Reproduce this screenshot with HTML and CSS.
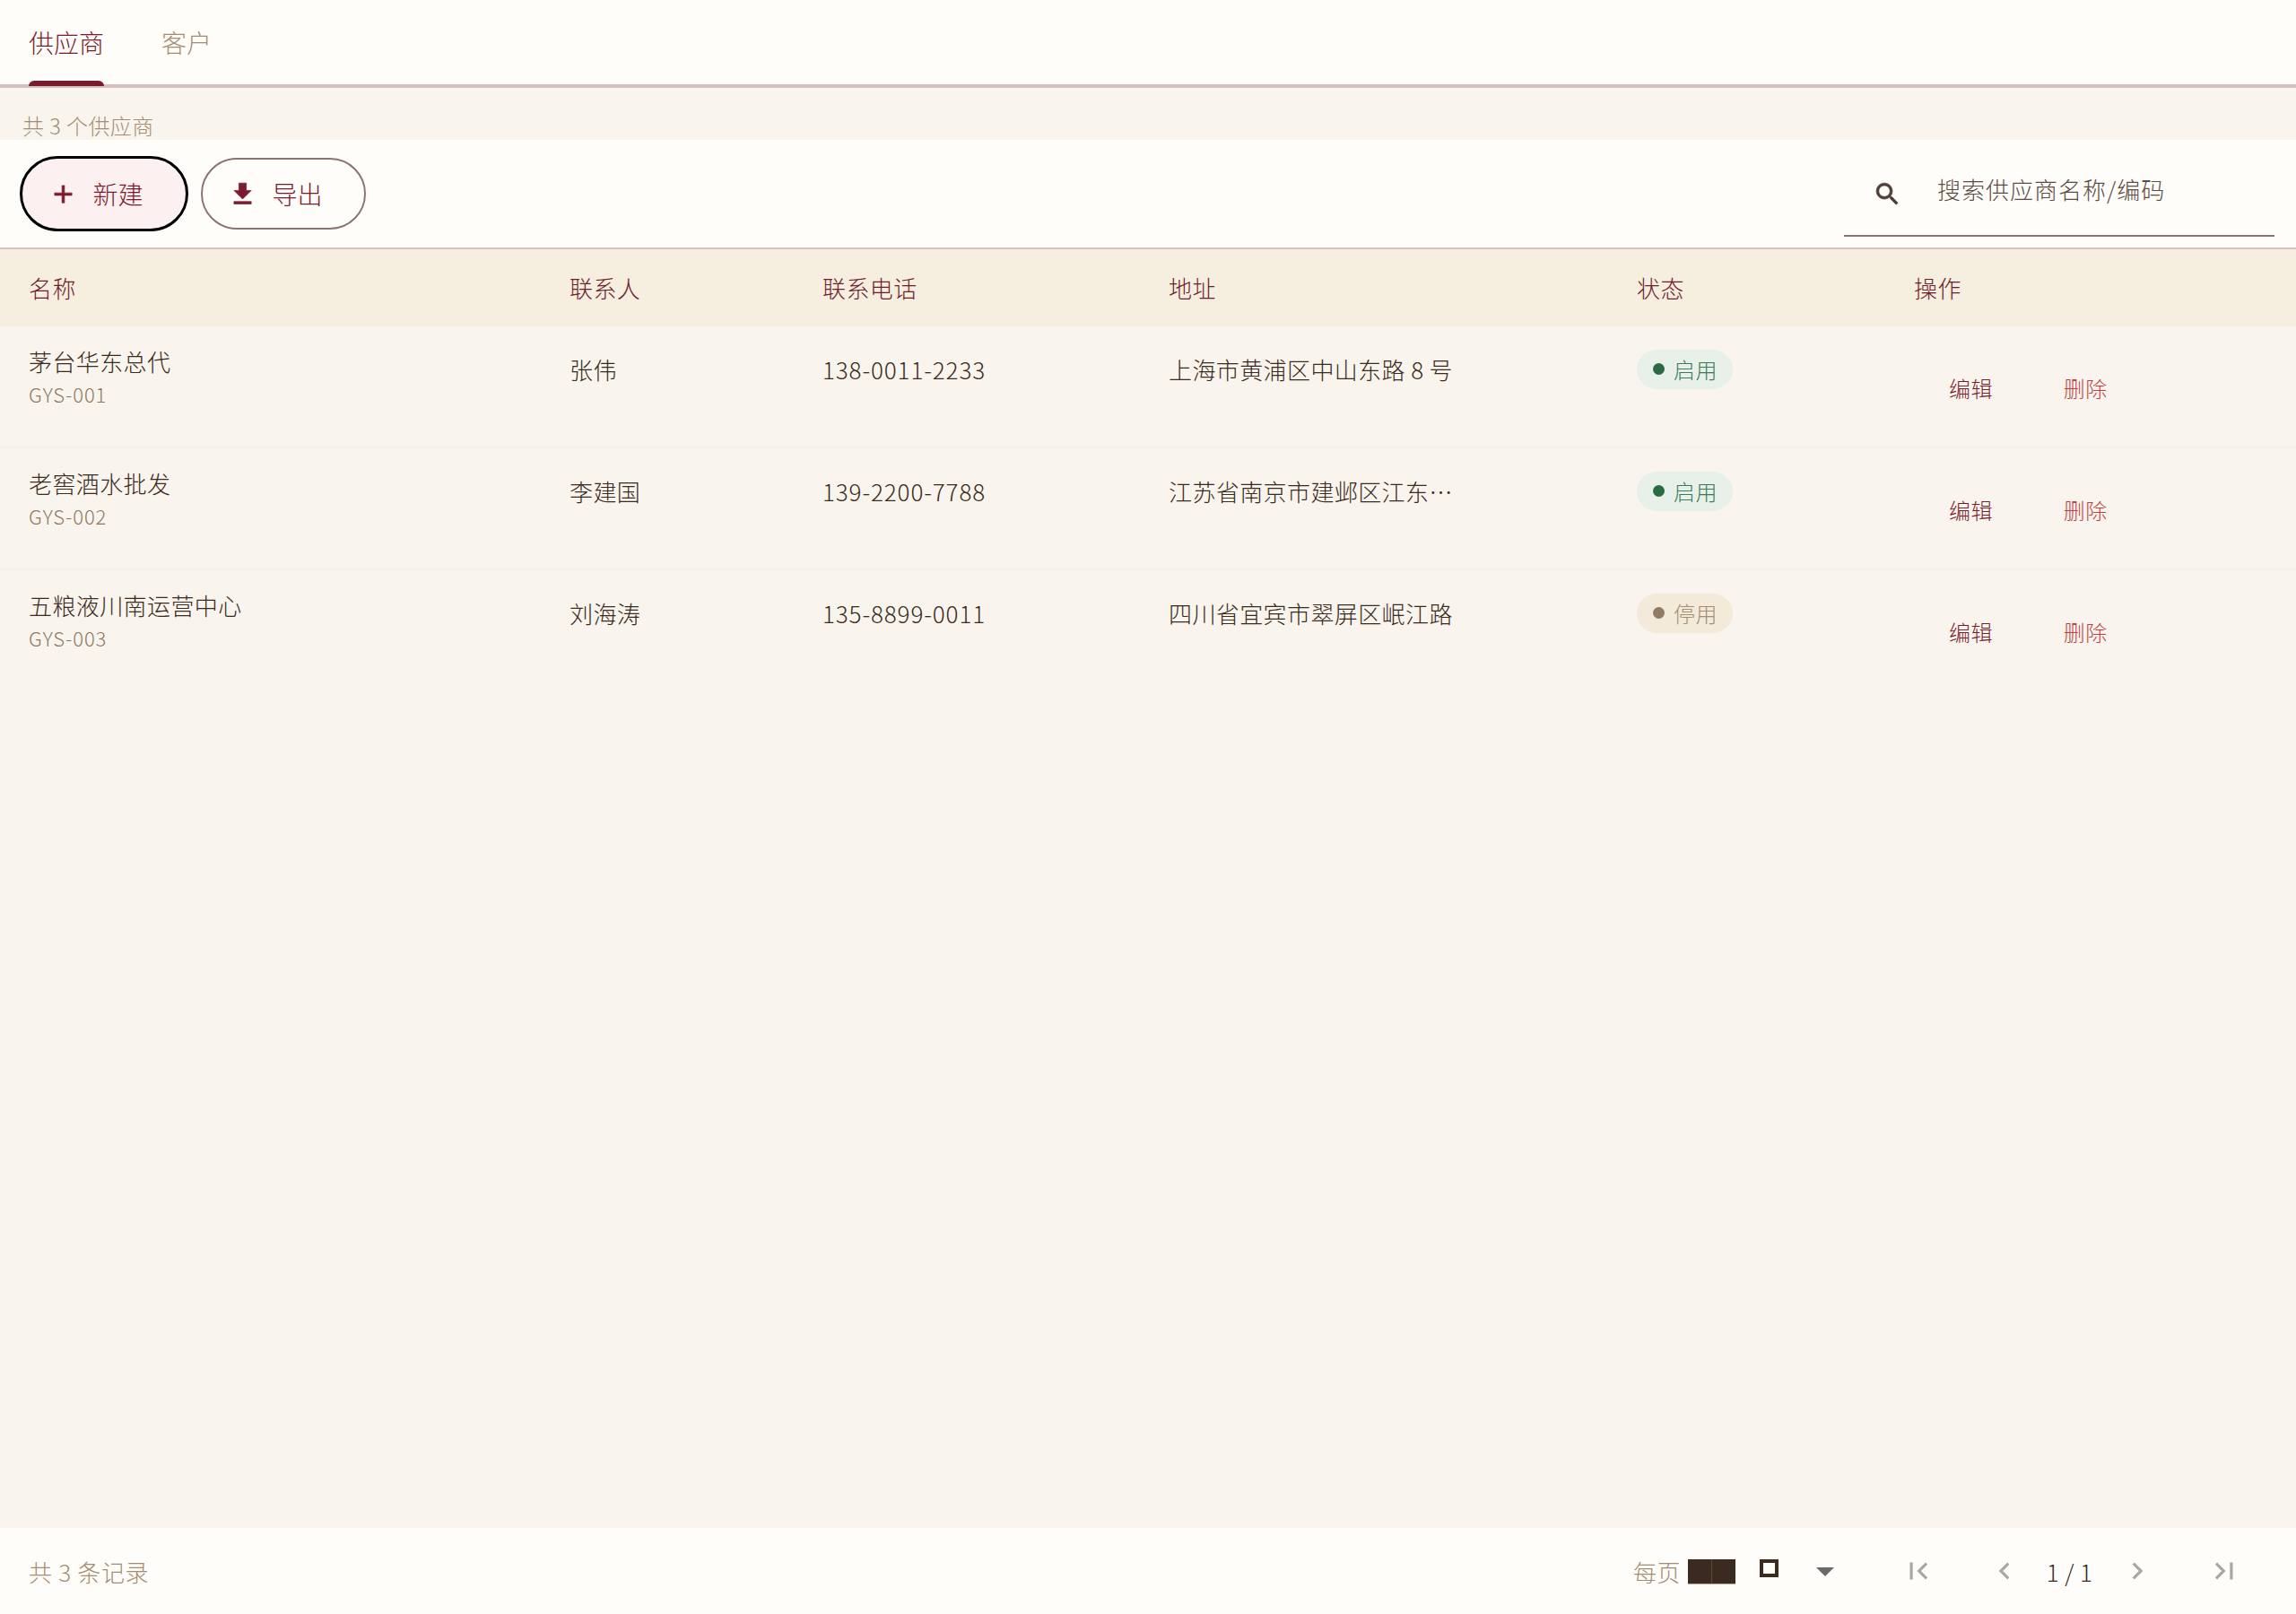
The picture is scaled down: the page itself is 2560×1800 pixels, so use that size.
FILE: index.html
```html
<!DOCTYPE html>
<html lang="zh-CN">
<head>
  <meta charset="UTF-8">
  <title>供应商</title>
  <link rel="stylesheet" href="styles.css">
</head>
<body>
  <div class="page">
    <div class="tabs">
      <div class="tab active">供应商</div>
      <div class="tab">客户</div>
    </div>
    <div class="note">共 3 个供应商</div>
    <div class="toolbar">
      <button class="btn btn-new">
        <svg class="icon" viewBox="0 0 24 24"><path d="M19 13h-6v6h-2v-6H5v-2h6V5h2v6h6v2z"/></svg>
        新建
      </button>
      <button class="btn btn-export">
        <svg class="icon" viewBox="0 0 24 24"><path d="M19 9h-4V3H9v6H5l7 7 7-7zM5 18v2h14v-2H5z"/></svg>
        导出
      </button>
      <div class="search">
        <svg class="search-icon" viewBox="0 0 24 24"><path d="M15.5 14h-.79l-.28-.27C15.41 12.59 16 11.11 16 9.5 16 5.91 13.09 3 9.5 3S3 5.91 3 9.5 5.91 16 9.5 16c1.61 0 3.09-.59 4.23-1.57l.27.28v.79l5 4.99L20.49 19l-4.99-5zm-6 0C7.01 14 5 11.99 5 9.5S7.01 5 9.5 5 14 7.01 14 9.5 11.99 14 9.5 14z"/></svg>
        <span class="search-text">搜索供应商名称/编码</span>
      </div>
    </div>

    <div class="row head">
      <div>名称</div>
      <div>联系人</div>
      <div>联系电话</div>
      <div>地址</div>
      <div>状态</div>
      <div>操作</div>
    </div>

    <div class="row item">
      <div class="cell-name">
        <div class="name">茅台华东总代</div>
        <div class="code">GYS-001</div>
      </div>
      <div class="cell">张伟</div>
      <div class="cell phone">138-0011-2233</div>
      <div class="cell"><div class="addr">上海市黄浦区中山东路 8 号</div></div>
      <div class="cell-status"><span class="pill on"><i></i>启用</span></div>
      <div class="cell-ops"><a class="edit">编辑</a><a class="del">删除</a></div>
    </div>
    <div class="row item">
      <div class="cell-name">
        <div class="name">老窖酒水批发</div>
        <div class="code">GYS-002</div>
      </div>
      <div class="cell">李建国</div>
      <div class="cell phone">139-2200-7788</div>
      <div class="cell"><div class="addr">江苏省南京市建邺区江东中路 100 号</div></div>
      <div class="cell-status"><span class="pill on"><i></i>启用</span></div>
      <div class="cell-ops"><a class="edit">编辑</a><a class="del">删除</a></div>
    </div>
    <div class="row item">
      <div class="cell-name">
        <div class="name">五粮液川南运营中心</div>
        <div class="code">GYS-003</div>
      </div>
      <div class="cell">刘海涛</div>
      <div class="cell phone">135-8899-0011</div>
      <div class="cell"><div class="addr">四川省宜宾市翠屏区岷江路</div></div>
      <div class="cell-status"><span class="pill off"><i></i>停用</span></div>
      <div class="cell-ops"><a class="edit">编辑</a><a class="del">删除</a></div>
    </div>

    <div class="spacer"></div>

    <div class="footer">
      <div class="total">共 3 条记录</div>
      <div class="pager">
        <span class="per">每页</span>
        <span class="size"><b></b><b></b></span>
        <span class="box"></span>
        <svg class="caret" viewBox="0 0 24 24"><path d="M7 10l5 5 5-5z"/></svg>
        <svg class="nav first" viewBox="0 0 24 24"><path d="M18.41 16.59L13.83 12l4.58-4.59L17 6l-6 6 6 6 1.41-1.41zM6 6h2v12H6V6z"/></svg>
        <svg class="nav prev" viewBox="0 0 24 24"><path d="M15.41 7.41L14 6l-6 6 6 6 1.41-1.41L10.83 12z"/></svg>
        <span class="num">1 / 1</span>
        <svg class="nav next" viewBox="0 0 24 24"><path d="M10 6L8.59 7.41 13.17 12l-4.58 4.59L10 18l6-6z"/></svg>
        <svg class="nav last" viewBox="0 0 24 24"><path d="M5.59 7.41L10.18 12l-4.59 4.59L7 18l6-6-6-6-1.41 1.41zM16 6h2v12h-2V6z"/></svg>
      </div>
    </div>
  </div>
</body>
</html>
```

FILE: styles.css
```css
* {
  box-sizing: border-box;
}
body {
  margin: 0;
  font-family: "Noto Sans CJK SC", "Noto Sans", sans-serif;
  font-weight: 200;
  font-variant-numeric: tabular-nums;
  letter-spacing: 0.4px;
  background: #f9f5ee;
  color: #3a2a20;
}
.page {
  height: 1800px;
  display: flex;
  flex-direction: column;
  overflow: hidden;
}
.tabs {
  height: 98px;
  display: flex;
  gap: 64px;
  padding-left: 32px;
  background: #fffdf9;
  border-bottom: 4px solid #d4c1be;
  letter-spacing: 0;
}
.tab {
  position: relative;
  height: 94px;
  font-size: 28px;
  line-height: 94px;
  color: #a48d72;
}
.tab.active {
  color: #7a1c2e;
}
.tab.active::after {
  content: "";
  position: absolute;
  left: 0;
  right: 0;
  bottom: -2px;
  height: 6px;
  background: #7a1c2e;
  border-radius: 6px 6px 0 0;
}
.note {
  height: 58px;
  padding: 27px 0 0 25px;
  font-size: 24px;
  line-height: 30px;
  color: #a48d72;
}
.toolbar {
  height: 122px;
  display: flex;
  align-items: center;
  padding: 0 24px 0 22px;
  background: #fffdf9;
  border-bottom: 2px solid #d6c4c1;
}
.btn {
  display: flex;
  align-items: center;
  justify-content: center;
  padding: 0 18px 0 0;
  font-family: inherit;
  font-weight: 200;
  font-size: 28px;
  color: #7a1c2e;
  border-radius: 42px;
}
.btn-new {
  width: 188px;
  height: 84px;
  background: #fdf0f0;
  border: 3px solid #000;
}
.btn-export {
  width: 184px;
  height: 80px;
  margin-left: 14px;
  background: #fffdf9;
  border: 2px solid #8a7571;
}
.icon {
  width: 33px;
  height: 33px;
  margin-right: 16px;
  fill: #7a1c2e;
  stroke: #7a1c2e;
  stroke-width: 0.5;
}
.search {
  margin-left: auto;
  width: 480px;
  height: 96px;
  display: flex;
  align-items: flex-start;
  border-bottom: 2px solid #8a7571;
}
.search-icon {
  width: 33px;
  height: 33px;
  margin: 32px 0 0 32px;
  fill: #4f3f38;
  stroke: #4f3f38;
  stroke-width: 0.5;
}
.search-text {
  margin: 25px 0 0 39px;
  font-size: 26px;
  line-height: 36px;
  letter-spacing: 1px;
  color: #5b4c44;
}
.row {
  display: grid;
  grid-template-columns: 603px 282px 386px 522px 309px 458px;
}
.head {
  height: 86px;
  background: #f6efe0;
  color: #6f1d2b;
  font-size: 26px;
  line-height: 86px;
}
.head > div {
  padding-left: 32px;
}
.item {
  height: 136px;
  border-bottom: 2px solid #f6f1e8;
  font-size: 26px;
}
.item:nth-last-child(3) {
  border-bottom: 0;
}
.item > div {
  padding-left: 32px;
}
.name {
  margin-top: 19px;
  line-height: 40px;
  color: #3a2a20;
}
.code {
  font-size: 22px;
  line-height: 32px;
  letter-spacing: 0.85px;
  color: #8f7860;
}
.cell {
  padding-top: 28px;
  line-height: 40px;
  color: #3a2a20;
}
.phone {
  letter-spacing: 0.9px;
}
.addr {
  max-width: 320px;
  white-space: nowrap;
  overflow: hidden;
  text-overflow: ellipsis;
}
.cell-status {
  padding-top: 24px;
}
.pill {
  display: inline-flex;
  align-items: center;
  height: 44px;
  padding: 0 17px 0 18px;
  border-radius: 22px;
  font-size: 24px;
}
.pill i {
  width: 13px;
  height: 13px;
  margin-right: 10px;
  border-radius: 50%;
}
.pill.on {
  background: #e7f1e9;
  color: #3f7a58;
}
.pill.on i {
  background: #2a6b45;
}
.pill.off {
  background: #f3ead9;
  color: #a48d72;
}
.pill.off i {
  background: #917b62;
}
.cell-ops {
  padding-top: 52px;
  display: flex;
  font-size: 24px;
  line-height: 34px;
}
.cell-ops a {
  margin-left: 39px;
  margin-right: 79px;
}
.cell-ops a + a {
  margin-left: 0;
}
.edit {
  color: #7a1c2e;
}
.del {
  color: #c23f45;
}
.spacer {
  flex: 1;
}
.footer {
  height: 96px;
  display: flex;
  align-items: center;
  justify-content: space-between;
  padding-left: 32px;
  background: #fffdf9;
  font-size: 26px;
  color: #a48d72;
}
.total {
  letter-spacing: 0.7px;
}
.pager {
  display: flex;
  align-items: center;
  width: 739px;
}
.size {
  display: flex;
  margin-left: 8px;
  height: 27px;
  width: 53px;
  gap: 1px;
  background: #5a4a3e;
  box-shadow: 0 1px 0 #b5a594;
}
.size b {
  flex: 1;
  background: #3a2a20;
}
.box {
  width: 21px;
  height: 20px;
  margin: -6px 0 0 27px;
  border: 4px solid #3a2a20;
  background: #fffdf9;
}
.caret {
  width: 48px;
  height: 48px;
  margin-left: 28px;
  fill: #6b6b6b;
}
.nav {
  width: 38px;
  height: 38px;
  fill: #aca6a0;
}
.first {
  margin-left: 61px;
}
.prev {
  margin-left: 58px;
}
.num {
  margin-left: 28px;
  color: #3a2a20;
}
.next {
  margin-left: 31px;
}
.last {
  margin-left: 59px;
}
```
